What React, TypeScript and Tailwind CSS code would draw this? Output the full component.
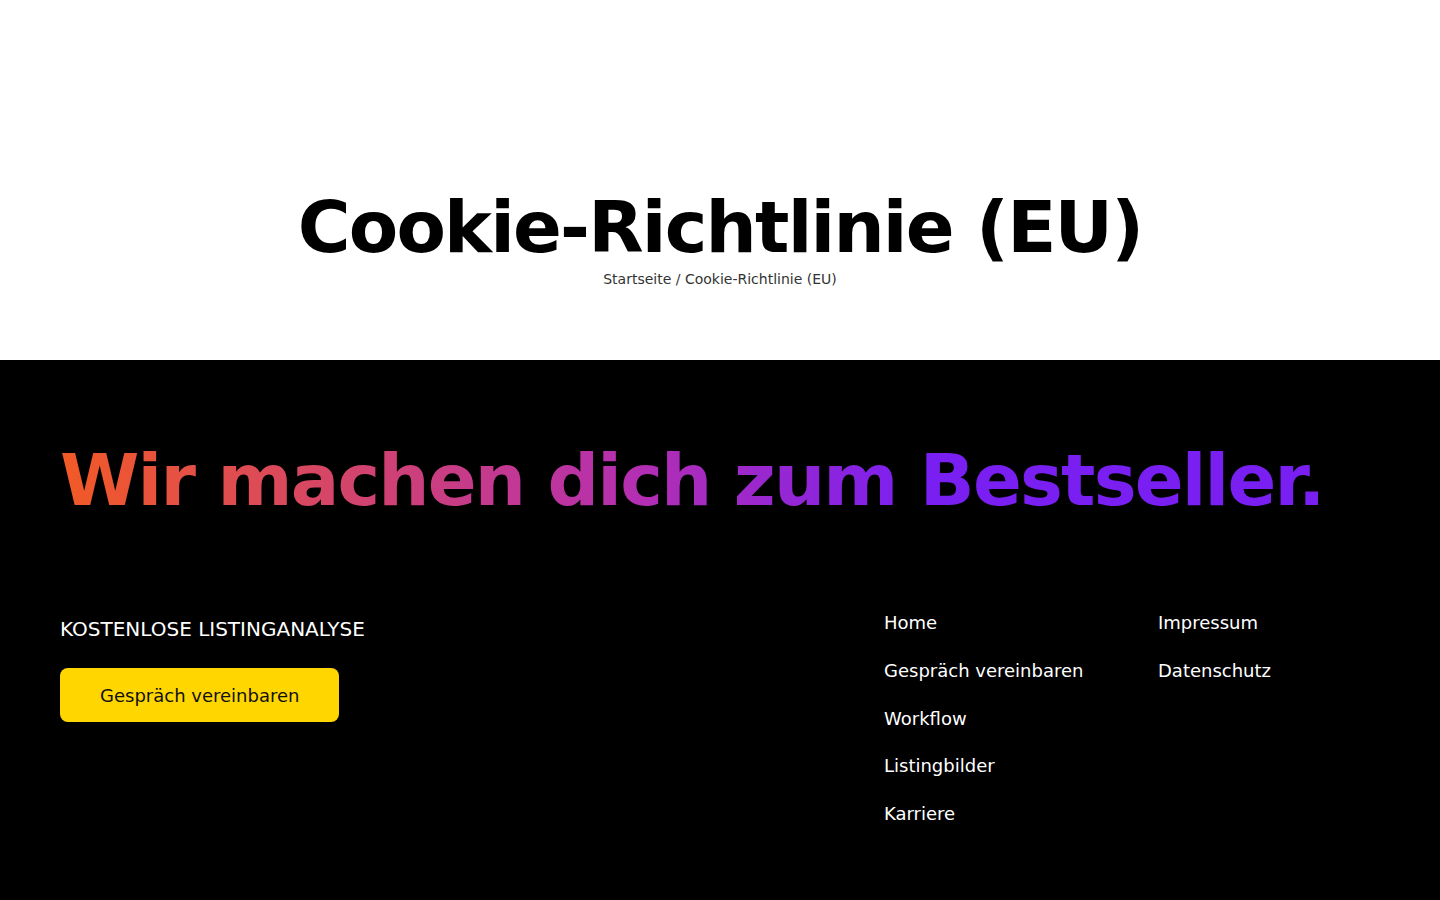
import React from 'react';

const navMain = ['Home', 'Gespräch vereinbaren', 'Workflow', 'Listingbilder', 'Karriere'];
const navLegal = ['Impressum', 'Datenschutz'];

const App: React.FC = () => {
  return (
    <div className="min-h-screen bg-black font-['DejaVu_Sans',sans-serif]">
      {/* Seitenkopf */}
      <header className="h-[360px] bg-white flex flex-col items-center justify-center pt-[120px]">
        <h1 className="text-[72px] leading-none font-bold tracking-[-1.8px] text-black">Cookie-Richtlinie (EU)</h1>
        <nav className="mt-[6px] text-[14px] text-[#333]">
          <a href="#">Startseite</a> / <span>Cookie-Richtlinie (EU)</span>
        </nav>
      </header>

      {/* Footer */}
      <footer className="bg-black text-white px-[60px] pt-[84px] pb-[60px]">
        <h2 className="text-[72px] leading-none font-bold tracking-[-1.8px]">
          <span className="bg-[linear-gradient(90deg,#f25a26_0%,#b52fb0_45%,#7a1ff2_68%,#7a1ff2_100%)] bg-clip-text text-transparent">
            Wir machen dich zum Bestseller.
          </span>
        </h2>

        <div className="mt-[93px] grid grid-cols-[1fr_274px_222px]">
          <div className="pt-[5px]">
            <p className="text-[20px] uppercase">Kostenlose Listinganalyse</p>
            <button
              type="button"
              className="mt-[24px] h-[54px] px-[40px] rounded-lg bg-[#ffd600] text-[#111] text-[18px]"
            >
              Gespräch vereinbaren
            </button>
          </div>
          <ul className="flex flex-col gap-[20.75px] text-[18px]">
            {navMain.map(item => (
              <li key={item}>
                <a href="#">{item}</a>
              </li>
            ))}
          </ul>
          <ul className="flex flex-col gap-[20.75px] text-[18px]">
            {navLegal.map(item => (
              <li key={item}>
                <a href="#">{item}</a>
              </li>
            ))}
          </ul>
        </div>
      </footer>
    </div>
  );
};

export default App;
